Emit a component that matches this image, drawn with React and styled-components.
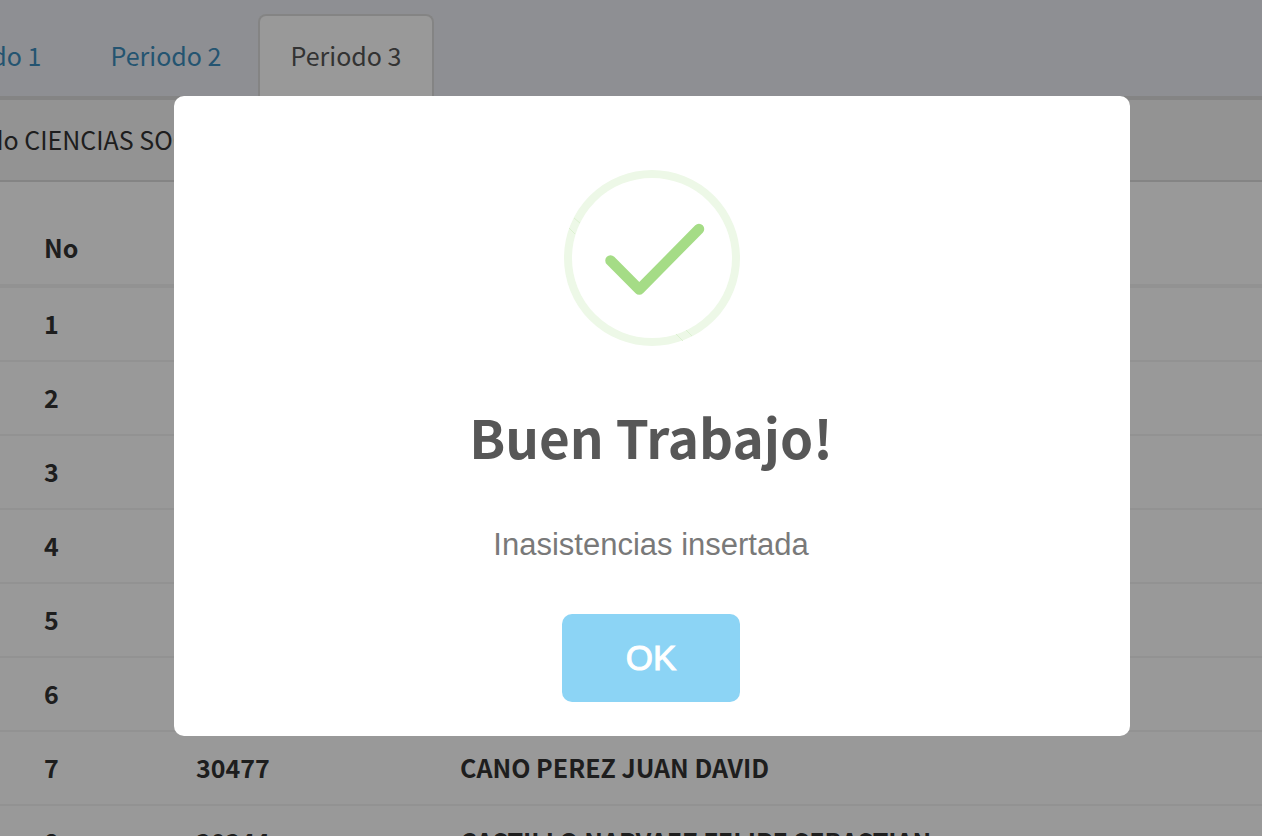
import React from "react";
import styled, { createGlobalStyle } from "styled-components";

const GlobalStyle = createGlobalStyle`
  *, *::before, *::after { box-sizing: border-box; }
  body {
    margin: 0;
    background: #fff;
    color: #333;
    font: 25px/40px "Noto Sans CJK JP", "Noto Sans CJK SC", sans-serif;
  }
`;

const Page = styled.div`
  height: 100vh;
  overflow: hidden;
`;

const TabBar = styled.nav`
  display: flex;
  gap: 4px;
  padding-top: 14px;
  background: #edeff5;
  border-bottom: 2px solid #ddd;
`;

const TabStrip = styled.div`
  display: flex;
  gap: 4px;
  margin: 0 0 -2px -102px;
`;

const Tab = styled.a`
  width: 176px;
  padding: 19px 0 23px;
  border: 2px solid ${(p) => (p.$active ? "#ddd" : "transparent")};
  border-bottom: 0;
  border-radius: 8px 8px 0 0;
  background: ${(p) => (p.$active ? "#fff" : "transparent")};
  color: ${(p) => (p.$active ? "#555" : "#3c8dbc")};
  text-align: center;
  text-decoration: none;
`;

const Panel = styled.section`
  border-top: 2px solid #ddd;
`;

const PanelHeading = styled.header`
  padding: 19px 0 21px;
  background: #f5f5f5;
  border-bottom: 2px solid #ddd;
  white-space: nowrap;
`;

const PanelTitle = styled.span`
  display: block;
  margin-left: -12px;
`;

const Table = styled.table`
  width: 100%;
  table-layout: fixed;
  border-collapse: separate;
  border-spacing: 0;
  font-weight: 700;
  white-space: nowrap;
`;

const Head = styled.th`
  width: ${(p) => p.$width || "auto"};
  padding: 45px 0 17px ${(p) => (p.$first ? "44px" : "16px")};
  border-bottom: 4px solid #f4f4f4;
  text-align: left;
`;

const Cell = styled.td`
  height: 74px;
  padding: 15px 0 17px ${(p) => (p.$first ? "44px" : "16px")};
  border-bottom: 2px solid #f4f4f4;
`;

const Overlay = styled.div`
  position: fixed;
  inset: 0;
  display: flex;
  align-items: center;
  justify-content: center;
  padding: 0 0 4px 42px;
  background: rgba(0, 0, 0, 0.4);
`;

const Dialog = styled.div`
  display: flex;
  flex-direction: column;
  align-items: center;
  width: 100%;
  max-width: 956px;
  padding: 74px 36px 34px 34px;
  border-radius: 10px;
  background: #fff;
  text-align: center;
`;

const IconFrame = styled.div`
  display: flex;
  padding-left: 2px;
`;

const DialogTitle = styled.h2`
  margin: 50px 0 48px;
  color: #575757;
  font-size: 53px;
  font-weight: 700;
  line-height: 80px;
`;

const DialogText = styled.p`
  margin: 0 0 48px;
  color: #797979;
  font: 31px/42px "Liberation Sans", Arial, sans-serif;
`;

const ConfirmButton = styled.button`
  width: 178px;
  height: 88px;
  padding: 0;
  border: 0;
  border-radius: 10px;
  background: #8cd4f5;
  color: #fff;
  font: 35px/40px "Liberation Sans", Arial, sans-serif;
  -webkit-text-stroke: 1px #fff;
`;

const SuccessIcon = () => (
  <svg width="176" height="176" viewBox="0 0 176 176" fill="none" aria-hidden="true">
    <circle cx="88" cy="88" r="84" stroke="#edf8e7" strokeWidth="8" />
    <path
      d="M10 48l6 5M5 58l6 6M112 164l7 7M122 160l6 6"
      stroke="#dcf1d1"
      strokeWidth="1"
    />
    <path
      d="M46.500 90.500L75.300 119.500L135 59"
      stroke="#a5dc86"
      strokeWidth="10.500"
      strokeLinecap="round"
      strokeLinejoin="round"
    />
  </svg>
);

const tabs = ["Periodo 1", "Periodo 2", "Periodo 3"];

const students = [
  { no: 1 },
  { no: 2 },
  { no: 3 },
  { no: 4 },
  { no: 5 },
  { no: 6 },
  { no: 7, code: "30477", name: "CANO PEREZ JUAN DAVID" },
  { no: 8, code: "30344", name: "CASTILLO NARVAEZ FELIPE SEBASTIAN" },
];

export default function App() {
  return (
    <>
      <GlobalStyle />
      <Page>
        <TabBar>
          <TabStrip>
            {tabs.map((label) => (
              <Tab key={label} href="#" $active={label === "Periodo 3"}>
                {label}
              </Tab>
            ))}
          </TabStrip>
        </TabBar>
        <Panel>
          <PanelHeading>
            <PanelTitle>do CIENCIAS SOCIALES</PanelTitle>
          </PanelHeading>
          <Table>
            <thead>
              <tr>
                <Head $first $width="180px">No</Head>
                <Head $width="264px" />
                <Head />
              </tr>
            </thead>
            <tbody>
              {students.map((s) => (
                <tr key={s.no}>
                  <Cell $first>{s.no}</Cell>
                  <Cell>{s.code}</Cell>
                  <Cell>{s.name}</Cell>
                </tr>
              ))}
            </tbody>
          </Table>
        </Panel>
      </Page>
      <Overlay>
        <Dialog role="dialog" aria-modal="true" aria-labelledby="dialog-title">
          <IconFrame>
            <SuccessIcon />
          </IconFrame>
          <DialogTitle id="dialog-title">Buen Trabajo!</DialogTitle>
          <DialogText>Inasistencias insertada</DialogText>
          <ConfirmButton type="button">OK</ConfirmButton>
        </Dialog>
      </Overlay>
    </>
  );
}
